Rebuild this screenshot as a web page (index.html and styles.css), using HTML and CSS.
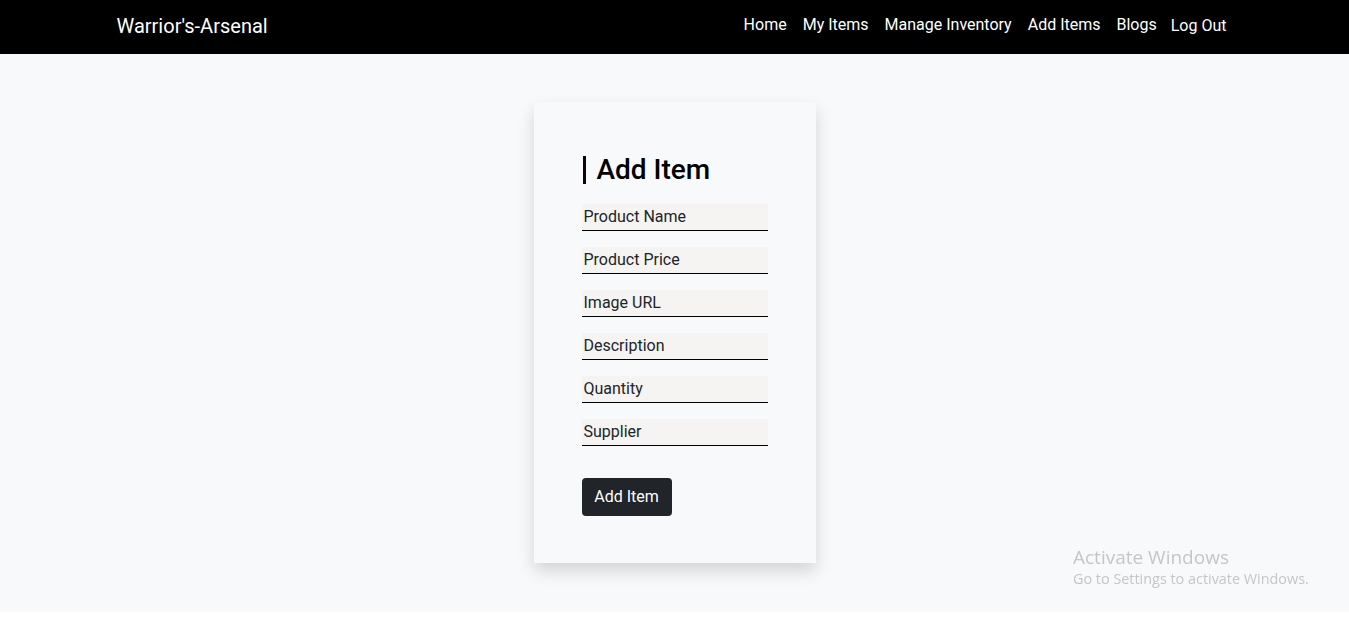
FILE: index.html
```html
<!DOCTYPE html>
<html lang="en">
<head>
<meta charset="utf-8">
<title>Warrior's-Arsenal</title>
<link rel="stylesheet" href="styles.css">
</head>
<body>
<header class="navbar">
  <div class="container nav-inner">
    <a class="brand" href="#">Warrior's-Arsenal</a>
    <nav class="nav-links">
      <a class="nav-link" href="#">Home</a>
      <a class="nav-link" href="#">My Items</a>
      <a class="nav-link" href="#">Manage Inventory</a>
      <a class="nav-link" href="#">Add Items</a>
      <a class="nav-link" href="#">Blogs</a>
      <button class="logout">Log Out</button>
    </nav>
  </div>
</header>
<main class="page">
  <section class="card">
    <h2 class="title">Add Item</h2>
    <form class="form">
      <input class="field" type="text" placeholder="Product Name">
      <input class="field" type="text" placeholder="Product Price">
      <input class="field" type="text" placeholder="Image URL">
      <input class="field" type="text" placeholder="Description">
      <input class="field" type="text" placeholder="Quantity">
      <input class="field" type="text" placeholder="Supplier">
      <button class="submit" type="button">Add Item</button>
    </form>
  </section>
</main>
<div class="watermark">
  <div class="wm-title">Activate Windows</div>
  <div class="wm-sub">Go to Settings to activate Windows.</div>
</div>
</body>
</html>
```
FILE: styles.css
```css
* { box-sizing: border-box; }
html, body { margin: 0; padding: 0; background: #fff; }
body { font-family: Roboto, "Liberation Sans", Arial, sans-serif; color: #212529; }

.navbar { background: #000; height: 54px; }
.container { max-width: 1140px; margin: 0 auto; padding: 0 12px; }
.nav-inner { display: flex; align-items: center; justify-content: space-between; height: 54px; }
.brand { color: #fff; text-decoration: none; font-size: 20px; line-height: 30px; margin-top: -2px; }
.nav-links { display: flex; align-items: center; margin-top: -4px; }
.nav-link { color: #fff; text-decoration: none; font-size: 16px; line-height: 24px; padding: 8px 8px; }
.logout { background: transparent; border: 0; color: #fff; font-family: inherit; font-size: 16px; line-height: 24px; padding: 6px 6px; margin-left: 0; margin-top: 1px; cursor: pointer; }

.page { background: #f8f9fa; height: 558px; padding-top: 48px; display: flex; justify-content: center; }
.card { width: 282px; height: 461px; background: #f8f9fa; box-shadow: 0 8px 16px rgba(0,0,0,0.15); padding: 48px 48px; }
.title { margin: 6px 0 20px 1px; font-size: 28px; font-weight: 500; line-height: 28px; color: #000; border-left: 3px solid #120404; padding-left: 11px; }
.form { display: flex; flex-direction: column; align-items: flex-start; }
.field { width: 186px; height: 27px; margin: 0 0 16px 0; border: 0; border-bottom: 1px solid #000; background: #f5f4f2; font-family: inherit; font-size: 16px; padding: 0 2px 2px 2px; color: #212529; outline: none; }
.field::placeholder { color: #212529; opacity: 1; }
.submit { margin-top: 16px; width: 90px; height: 38px; background: #212529; color: #fff; border: 0; border-radius: 4px; font-family: inherit; font-size: 16px; padding: 0 0 2px 0; cursor: pointer; }

.watermark { position: fixed; left: 1073px; top: 545px; font-family: "Open Sans", "Noto Sans", sans-serif; color: #c4c6c8; }
.wm-title { font-size: 19px; line-height: 24px; }
.wm-sub { font-size: 14.4px; line-height: 20px; }
```
